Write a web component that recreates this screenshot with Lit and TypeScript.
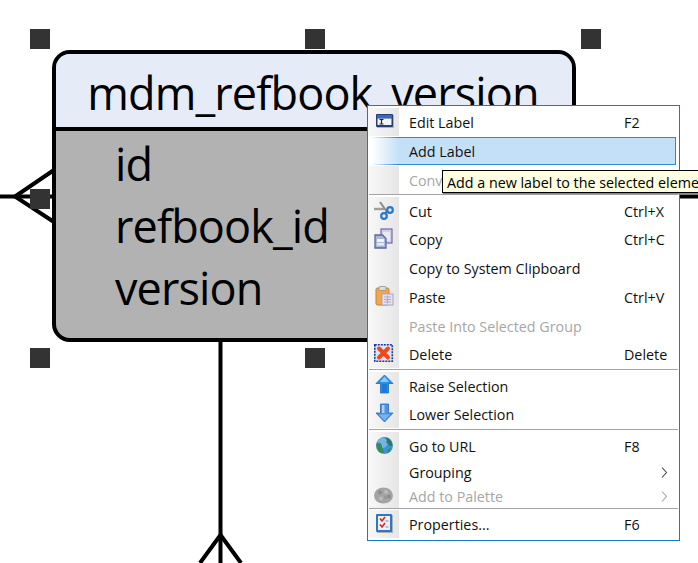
import { LitElement, html, css, svg } from "lit";
import { customElement } from "lit/decorators.js";

const icons: Record<string, unknown> = {
  edit: svg`<rect x="3" y="3" width="17" height="13" fill="#b4b4b4"/><rect x="2" y="2" width="17" height="13" rx="1" fill="#243f78"/><rect x="3" y="3" width="15" height="3" fill="#2c6cc8"/><rect x="3.500" y="6.500" width="14" height="6.500" fill="#f4f4f4"/><path d="M5.500 7.500h4M7.500 7.500v4.500M5.500 12h4" stroke="#222" stroke-width="1.200" fill="none"/>`,
  cut: svg`<path d="M0 8h10" stroke="#a0a0a0" stroke-width="2.400" fill="none"/><path d="M6 1l7 10" stroke="#8a8a8a" stroke-width="2" fill="none"/><circle cx="16" cy="9" r="2.800" fill="none" stroke="#2a78c8" stroke-width="2.200"/><circle cx="10" cy="15" r="2.800" fill="none" stroke="#2a78c8" stroke-width="2.200"/><path d="M11 12l3-2" stroke="#2a78c8" stroke-width="2"/>`,
  copy: svg`<rect x="7" y="-1" width="11" height="14" fill="#d4cfe8" stroke="#7468a8" stroke-width="1.200"/><rect x="9" y="2" width="7" height="9" fill="#ece9f6"/><path d="M1 5h7.500l3.500 3.500v9.500h-11z" fill="#a9b8d8" stroke="#5a6a98" stroke-width="1.300"/><rect x="3" y="9" width="7" height="3" fill="#f4f6fb"/><rect x="3" y="13" width="7" height="2.500" fill="#e4eaf4"/>`,
  paste: svg`<rect x="2" y="0" width="13" height="17" rx="1.500" fill="#f4a648" stroke="#c88030"/><rect x="5" y="-1.500" width="7" height="4" rx="1" fill="#dcdcdc" stroke="#909090" stroke-width=".8"/><rect x="8" y="6" width="11" height="11" fill="#e4e2f0" stroke="#a8a4c0"/><path d="M10 9h7M10 11.500h7M10 14h7M13.500 7.500v8" stroke="#a8a4c8" stroke-width=".9"/>`,
  del: svg`<rect x=".8" y=".8" width="17.500" height="16.500" fill="#dfe3f2" stroke="#123c98" stroke-width="1.600" stroke-dasharray="2 1"/><path d="M5 4.500l9 9M14 4.500l-9 9" stroke="#f04818" stroke-width="4" stroke-linecap="round"/>`,
  up: svg`<path d="M10.500 -1l8.500 8.500h-4.500v9.500h-8v-9.500h-4.500z" fill="#2a8ee8" stroke="#1a68b8" stroke-width=".8"/><path d="M10.500 .5l4.500 5.500h-9z" fill="#8cc8f8"/><rect x="8" y="8" width="5" height="8" fill="#1a7ad8"/>`,
  down: svg`<path d="M6.500 0h8v9h4.500l-8.500 9-8.500-9h4.500z" fill="#4a94e8" stroke="#2a68b8" stroke-width=".8"/><rect x="8" y="1" width="2.500" height="8" fill="#a8d0f8"/><path d="M10.500 16.500l-5.500-6h11z" fill="#78b4f0"/>`,
  globe: svg`<circle cx="10.500" cy="9.500" r="8.500" fill="#3f92d8"/><circle cx="8.500" cy="7" r="5" fill="#8cc4ec" opacity=".7"/><path d="M2.500 7.500c2-1 4-1 5 1s0 4 2 6-1 3.500-3 2.500-4-4-4-9.500z" fill="#3f8a50"/><path d="M12 1.500c2 .5 4 2 5 3l1.500 5-2.500 1-2-3-2-1 1-2z" fill="#2f7a58"/><path d="M14 13.500l3-2-1 4-3 2z" fill="#3f8a50"/>`,
  palette: svg`<ellipse cx="9.500" cy="8.500" rx="9.500" ry="8" fill="#a4a4a4"/><circle cx="6" cy="5.500" r="2" fill="#8c8c8c"/><circle cx="12" cy="5" r="2" fill="#bcbcbc"/><circle cx="15" cy="9.500" r="2" fill="#8c8c8c"/><circle cx="7" cy="11.500" r="2" fill="#bcbcbc"/><circle cx="11.500" cy="10.500" r="1.500" fill="#949494"/>`,
  props: svg`<rect x="3" y="1" width="16" height="18" fill="#b0b0b0"/><rect x="2" y="0" width="16" height="18" rx="1" fill="#2a78c8"/><rect x="4" y="2" width="12" height="14" fill="#f0f0f8"/><path d="M6 4.500l2 2.500 3-4M6 10.500l2 2.500 3-4" stroke="#d82828" stroke-width="1.600" fill="none"/><path d="M11.500 7h3M11.500 13h3" stroke="#8888a8"/>`,
};

type Row = { label?: string; key?: string; icon?: string; off?: boolean; hot?: boolean; sub?: boolean; h?: string; sep?: string };

const rows: Row[] = [
  { label: "Edit Label", key: "F2", icon: "edit" },
  { label: "Add Label", hot: true },
  { label: "Convert", off: true },
  { sep: "s3" },
  { label: "Cut", key: "Ctrl+X", icon: "cut" },
  { label: "Copy", key: "Ctrl+C", icon: "copy", h: "h29" },
  { label: "Copy to System Clipboard", h: "h29" },
  { label: "Paste", key: "Ctrl+V", icon: "paste", h: "h29" },
  { label: "Paste Into Selected Group", off: true },
  { label: "Delete", key: "Delete", icon: "del" },
  { sep: "s4" },
  { label: "Raise Selection", icon: "up" },
  { label: "Lower Selection", icon: "down" },
  { sep: "s4" },
  { label: "Go to URL", key: "F8", icon: "globe" },
  { label: "Grouping", sub: true, h: "h25" },
  { label: "Add to Palette", icon: "palette", off: true, sub: true, h: "h23" },
  { sep: "s2" },
  { label: "Properties...", key: "F6", icon: "props" },
];

@customElement("app-root")
export class AppRoot extends LitElement {
  static styles = css`
    :host { display: block; }
    .canvas { position: relative; width: 698px; height: 563px; overflow: hidden; background: #fff; font-family: "Open Sans", "Noto Sans", sans-serif; color: #000; }
    .wires { position: absolute; inset: 0; }
    .entity { position: absolute; left: 52px; top: 50px; width: 524px; height: 292px; box-sizing: border-box; border: 4px solid #000; border-radius: 18px; overflow: hidden; background: #b2b2b2; display: flex; flex-direction: column; font-size: 45px; letter-spacing: -0.87px; }
    .title { height: 69px; padding: 4px 2px 0 0; background: #e6ecf7; border-bottom: 4px solid #000; display: flex; align-items: center; justify-content: center; line-height: 1; white-space: nowrap; }
    .cols { padding: 2px 0 0 59px; line-height: 62px; }
    .handle { position: absolute; width: 20px; height: 20px; background: #333; }
    .h-tl { left: 30px; top: 29px; } .h-tm { left: 305px; top: 29px; } .h-tr { left: 581px; top: 29px; }
    .h-ml { left: 30px; top: 189px; } .h-bl { left: 30px; top: 348px; } .h-bm { left: 305px; top: 348px; }
    .menu { position: absolute; left: 367px; top: 105px; width: 313px; box-sizing: border-box; border: 1px solid #1a78c4; background: #fff; padding: 2px 1px 2px 0; font-size: 14.300px; }
    .row { position: relative; display: flex; align-items: center; height: 28px; }
    .h29 { height: 29px; } .h25 { height: 25px; } .h23 { height: 23px; }
    .gutter { align-self: stretch; width: 31px; flex: none; background: linear-gradient(90deg, #f8f8f8, #e6e6e6); display: flex; align-items: center; padding-left: 6px; box-sizing: border-box; }
    .gutter svg { width: 20px; height: 20px; display: block; overflow: visible; filter: blur(0.35px); }
    .label { margin-left: 10px; flex: 1; white-space: nowrap; color: #111; }
    .key { position: absolute; left: 256px; white-space: nowrap; color: #111; }
    .arrow { position: absolute; left: 293px; width: 6px; height: 11px; display: block; fill: none; stroke: #444; stroke-width: 1.100; }
    .off .label { color: #a6a6a6; }
    .off .arrow { stroke: #a6a6a6; }
    .hot { margin: 1px 0; }
    .hot .gutter { background: none; }
    .hot::before { content: ""; position: absolute; left: 4px; right: 2px; top: 0; bottom: 0; box-sizing: border-box; border: 1px solid #2a8ad8; border-left: none; background: linear-gradient(90deg, #fff, #c4e0f7 27px); border-image: linear-gradient(90deg, #fff, #2a8ad8 27px) 1; }
    .hot .label { position: relative; }
    .sep { display: flex; align-items: flex-start; padding: 0 0 0 1px; box-sizing: border-box; }
    .sep::before { content: ""; flex: 1; height: 1px; background: #a4a4a4; }
    .s2 { height: 2px; } .s3 { height: 3px; } .s4 { height: 4px; padding-top: 1px; }
    .tip { position: absolute; left: 442px; top: 170px; height: 23px; box-sizing: border-box; border: 1px solid #000; background: #ffffe1; padding: 0 5px 0 4px; line-height: 23px; font-size: 14.300px; white-space: nowrap; box-shadow: 1px 1px 1px #888; }
  `;

  render() {
    return html`<div class="canvas">
      <svg class="wires" width="698" height="563" viewBox="0 0 698 563">
        <g stroke="#000" stroke-width="4" fill="none">
          <path d="M0 196.500H698"/>
          <path d="M54 170L15 196.500L54 222"/>
          <path d="M220.500 340V563"/>
          <path d="M200 563L220.500 535L241 563"/>
        </g>
      </svg>
      <div class="entity">
        <div class="title">mdm_refbook_version</div>
        <div class="cols"><div>id</div><div>refbook_id</div><div>version</div></div>
      </div>
      ${["h-tl", "h-tm", "h-tr", "h-ml", "h-bl", "h-bm"].map((c) => html`<div class="handle ${c}"></div>`)}
      <div class="menu">
        ${rows.map((r) =>
          r.sep
            ? html`<div class="sep ${r.sep}"></div>`
            : html`<div class="row ${r.h ?? ""} ${r.off ? "off" : ""} ${r.hot ? "hot" : ""}">
                <div class="gutter">${r.icon ? html`<svg viewBox="0 0 20 20">${icons[r.icon]}</svg>` : ""}</div>
                <div class="label">${r.label}</div>
                ${r.key ? html`<div class="key">${r.key}</div>` : ""}
                ${r.sub ? html`<svg class="arrow" viewBox="0 0 6 11"><path d="M1 .5L5.500 5.500L1 10.500"/></svg>` : ""}
              </div>`
        )}
      </div>
      <div class="tip">Add a new label to the selected element</div>
    </div>`;
  }
}
